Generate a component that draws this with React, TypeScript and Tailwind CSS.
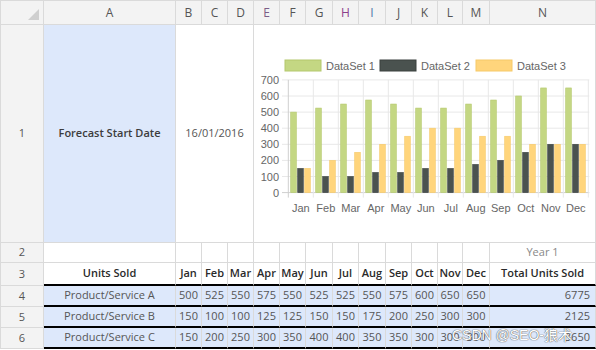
import React from 'react';

const letters = ['A', 'B', 'C', 'D', 'E', 'F', 'G', 'H', 'I', 'J', 'K', 'L', 'M', 'N'];
const months = ['Jan', 'Feb', 'Mar', 'Apr', 'May', 'Jun', 'Jul', 'Aug', 'Sep', 'Oct', 'Nov', 'Dec'];

const ds1 = [500, 525, 550, 575, 550, 525, 525, 550, 575, 600, 650, 650];
const ds2 = [150, 100, 100, 125, 125, 150, 150, 175, 200, 250, 300, 300];
const ds3 = [150, 200, 250, 300, 350, 400, 400, 350, 350, 300, 300, 300];

const products = [
  { name: 'Product/Service A', values: ds1 },
  { name: 'Product/Service B', values: ds2 },
  { name: 'Product/Service C', values: ds3 },
];

const cell = 'border-r border-b border-[#dadada] flex items-center justify-center';
const rowHead = `${cell} bg-[#f3f3f3] text-[#555] text-[11px]`;

// header letters that rendered with a tint in the original
const letterTint: { [k: string]: string } = { E: 'text-[#7b5d86]', H: 'text-[#8c3f8c]', I: 'text-[#4f78a8]' };

const chartFont = 'Liberation Sans, Arial, sans-serif';

function Chart() {
  const x0 = 34.3;
  const step = 25;
  const y = (v: number) => 167.6 - v * 0.161;
  return (
    <svg width="341" height="217" viewBox="0 0 341 217" className="block">
      {/* legend */}
      <rect x="31" y="35" width="36" height="11" fill="#c4d783" stroke="#b4c86c" />
      <text x="72" y="44.5" fontSize="11" fill="#666" fontFamily={chartFont}>DataSet 1</text>
      <rect x="126" y="35" width="36" height="11" fill="#4a524f" stroke="#3b413f" />
      <text x="167" y="44.5" fontSize="11" fill="#666" fontFamily={chartFont}>DataSet 2</text>
      <rect x="222" y="35" width="36" height="11" fill="#ffd57c" stroke="#f6c968" />
      <text x="263" y="44.5" fontSize="11" fill="#666" fontFamily={chartFont}>DataSet 3</text>

      {/* grid */}
      {[0, 100, 200, 300, 400, 500, 600, 700].map(v => (
        <g key={v}>
          <line x1="28" x2="335.3" y1={y(v)} y2={y(v)} stroke={v === 0 ? '#cfcfcf' : '#e8e8e8'} strokeWidth="1" />
          <text x="25" y={y(v) + 4} textAnchor="end" fontSize="11" fill="#666" fontFamily={chartFont}>{v}</text>
        </g>
      ))}
      {months.map((_, i) => (
        <line key={i} x1={x0 + (i + 1) * step} x2={x0 + (i + 1) * step} y1={y(700)} y2={y(0) + 5} stroke="#e8e8e8" />
      ))}
      <line x1={x0} x2={x0} y1={y(700)} y2={y(0) + 5} stroke="#cfcfcf" />

      {/* bars */}
      {months.map((m, i) => {
        const bx = x0 + i * step;
        return (
          <g key={m}>
            <rect x={bx + 2.4} y={y(ds1[i])} width="5.6" height={ds1[i] * 0.161} fill="#c4d783" stroke="#b4c86c" strokeWidth="0.6" />
            <rect x={bx + 9.4} y={y(ds2[i])} width="5.6" height={ds2[i] * 0.161} fill="#4a524f" stroke="#3b413f" strokeWidth="0.6" />
            <rect x={bx + 16.4} y={y(ds3[i])} width="5.6" height={ds3[i] * 0.161} fill="#ffd57c" stroke="#f6c968" strokeWidth="0.6" />
            <text x={bx + 12.5} y="187" textAnchor="middle" fontSize="11" fill="#666" fontFamily={chartFont}>{m}</text>
          </g>
        );
      })}
    </svg>
  );
}

export default function App() {
  return (
    <div className="relative w-[596px] h-[350px] bg-white overflow-hidden font-['Open_Sans',sans-serif]">
      <div className="grid border-l border-t border-[#dadada] grid-cols-[43px_132px_26px_26px_26px_26px_26px_27px_26px_27px_26px_26px_25px_27px_106px] grid-rows-[24px_218px_20px_23px_21px_21px_21px]">
        {/* column headers */}
        <div className={`${rowHead} relative`}>
          <div className="absolute right-[4px] bottom-[4px] w-0 h-0 border-l-[11px] border-l-transparent border-b-[11px] border-b-[#cfcfcf]" />
        </div>
        {letters.map(l => (
          <div key={l} className={`${cell} bg-[#f3f3f3] text-[12px] ${letterTint[l] ?? 'text-[#555]'}`}>{l}</div>
        ))}

        {/* row 1 */}
        <div className={rowHead}>1</div>
        <div className={`${cell} bg-[#dde8fb] text-[11px] font-semibold text-[#3c3c3c]`}>Forecast Start Date</div>
        <div className={`${cell} col-span-3 text-[11px] text-[#555]`}>16/01/2016</div>
        <div className={`${cell} col-span-10 !items-start !justify-start`}>
          <Chart />
        </div>

        {/* row 2 */}
        <div className={rowHead}>2</div>
        {letters.slice(0, 13).map(l => (
          <div key={l} className={cell} />
        ))}
        <div className={`${cell} text-[11px] text-[#888]`}>Year 1</div>

        {/* row 3 */}
        <div className={rowHead}>3</div>
        <div className={`${cell} border-b-2 border-b-black text-[11px] font-semibold text-[#2a2a2a]`}>Units Sold</div>
        {months.map(m => (
          <div key={m} className={`${cell} border-b-2 border-b-black text-[11px] font-semibold text-[#2a2a2a]`}>{m}</div>
        ))}
        <div className={`${cell} border-b-2 border-b-black text-[11px] font-semibold text-[#2a2a2a]`}>Total Units Sold</div>

        {/* rows 4-6 */}
        {products.map((p, r) => (
          <React.Fragment key={p.name}>
            <div className={rowHead}>{r + 4}</div>
            <div className={`${cell} bg-[#dde8fb] border-b-2 border-b-black text-[11px] text-[#555]`}>{p.name}</div>
            {p.values.map((v, i) => (
              <div key={i} className={`${cell} bg-[#dde8fb] border-b-2 border-b-black text-[11px] text-[#555]`}>{v}</div>
            ))}
            <div className={`${cell} !justify-end pr-[5px] bg-[#dde8fb] border-b-2 border-b-black text-[11px] text-[#555]`}>
              {p.values.reduce((a, b) => a + b, 0)}
            </div>
          </React.Fragment>
        ))}
      </div>

      {/* watermark */}
      <div className="absolute left-[452px] top-[325px] text-[14px] text-white font-['Liberation_Sans','Noto_Sans_CJK_SC',sans-serif] [text-shadow:0_0_1px_#555,0_0_1px_#555]">
        CSDN @SEO-狼术
      </div>
    </div>
  );
}
